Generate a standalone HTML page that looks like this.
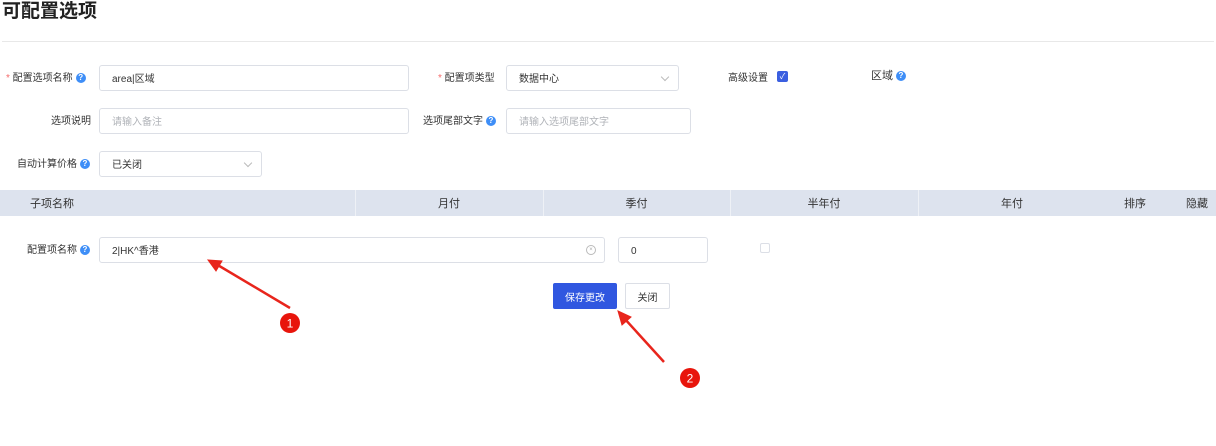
<!DOCTYPE html>
<html><head><meta charset="utf-8"><style>
*{box-sizing:border-box;margin:0;padding:0}
body{width:1216px;height:446px;background:#fff;position:relative;overflow:hidden;font-family:"Liberation Sans","Noto Sans CJK SC",sans-serif;color:#333;font-size:10px}
.a{position:absolute}
.inp{position:absolute;border:1px solid #dcdfe6;border-radius:3px;background:#fff;font-size:10px;line-height:12px;padding-left:12px;padding-top:3px;color:#333;display:flex;align-items:center}
.ph{color:#b0b3b8}
.q{display:inline-block;width:10px;height:10px;border-radius:50%;background:#3e8ef7;color:#fff;font-size:8px;line-height:10px;text-align:center;font-weight:bold;vertical-align:1px;margin-left:3px}
.lbl{position:absolute;font-size:10px;color:#333;text-align:right;line-height:14px;margin-top:2px}
.star{color:#f56c6c}
.chev{position:absolute;right:10px;top:8px;width:6px;height:6px;border-right:1px solid #bbb;border-bottom:1px solid #bbb;transform:rotate(45deg)}
.th{position:absolute;top:190px;height:26px;font-size:11px;color:#333;display:flex;align-items:center;justify-content:center}
.btn{position:absolute;display:flex;align-items:center;justify-content:center;font-size:10px}
</style></head><body>
<div class="a" style="left:2px;top:-4px;font-size:19px;font-weight:bold;color:#222">可配置选项</div>
<div class="a" style="left:2px;top:41px;width:1212px;height:1px;background:#e8e8e8"></div>

<div class="lbl" style="left:6px;top:70px"><span class="star">*</span> 配置选项名称<span class="q">?</span></div>
<div class="inp" style="left:99px;top:65px;width:310px;height:26px">area|区域</div>
<div class="lbl" style="left:438px;top:70px"><span class="star">*</span> 配置项类型</div>
<div class="inp" style="left:506px;top:65px;width:173px;height:26px">数据中心<span class="chev"></span></div>
<div class="lbl" style="left:728px;top:70px">高级设置</div>
<div class="a" style="left:777px;top:71px;width:11px;height:11px;background:#3b5fe0;border-radius:2px;color:#fff;font-size:8px;line-height:11px;text-align:center">✓</div>
<div class="a" style="left:871px;top:69px;font-size:11px;color:#333;line-height:14px">区域<span class="q">?</span></div>

<div class="lbl" style="left:51px;top:113px">选项说明</div>
<div class="inp ph" style="left:99px;top:108px;width:310px;height:26px">请输入备注</div>
<div class="lbl" style="left:423px;top:113px">选项尾部文字<span class="q">?</span></div>
<div class="inp ph" style="left:506px;top:108px;width:185px;height:26px">请输入选项尾部文字</div>

<div class="lbl" style="left:17px;top:156px">自动计算价格<span class="q">?</span></div>
<div class="inp" style="left:99px;top:151px;width:163px;height:26px">已关闭<span class="chev"></span></div>

<div class="a" style="left:0;top:190px;width:1216px;height:26px;background:#dde3ee"></div>
<div class="a" style="left:355px;top:190px;width:1px;height:26px;background:#eef1f6"></div>
<div class="a" style="left:543px;top:190px;width:1px;height:26px;background:#eef1f6"></div>
<div class="a" style="left:730px;top:190px;width:1px;height:26px;background:#eef1f6"></div>
<div class="a" style="left:918px;top:190px;width:1px;height:26px;background:#eef1f6"></div>
<div class="th" style="left:30px">子项名称</div>
<div class="th" style="left:355px;width:188px">月付</div>
<div class="th" style="left:543px;width:187px">季付</div>
<div class="th" style="left:730px;width:188px">半年付</div>
<div class="th" style="left:918px;width:188px">年付</div>
<div class="th" style="left:1124px">排序</div>
<div class="th" style="left:1186px">隐藏</div>

<div class="lbl" style="left:27px;top:242px">配置项名称<span class="q">?</span></div>
<div class="inp" style="left:99px;top:237px;width:506px;height:26px">2|HK^香港<span class="a" style="right:8px;top:7px;width:10px;height:10px;border:1px solid #bbb;border-radius:50%;font-size:6px;line-height:8px;text-align:center;color:#aaa">×</span></div>
<div class="inp" style="left:618px;top:237px;width:90px;height:26px">0</div>
<div class="a" style="left:760px;top:243px;width:10px;height:10px;border:1px solid #dcdfe6;border-radius:2px"></div>

<div class="btn" style="left:553px;top:283px;width:64px;height:26px;background:#3057e0;border-radius:2px;color:#fff">保存更改</div>
<div class="btn" style="left:625px;top:283px;width:45px;height:26px;border:1px solid #dcdfe6;border-radius:2px">关闭</div>

<svg class="a" style="left:0;top:0" width="1216" height="446">
<g stroke="#e8251c" stroke-width="2.5" fill="#e8251c">
<line x1="290" y1="308" x2="216" y2="264"/>
<polygon points="208,260 222,261 216,271" stroke-width="1"/>
<line x1="664" y1="362" x2="624" y2="318"/>
<polygon points="618,311 631,317 622,325" stroke-width="1"/>
</g>
<circle cx="290" cy="323" r="10" fill="#e8150c"/>
<text x="290" y="327.5" fill="#fff" font-size="12" text-anchor="middle" font-family="Liberation Sans">1</text>
<circle cx="690" cy="378" r="10" fill="#e8150c"/>
<text x="690" y="382.5" fill="#fff" font-size="12" text-anchor="middle" font-family="Liberation Sans">2</text>
</svg>
</body></html>
